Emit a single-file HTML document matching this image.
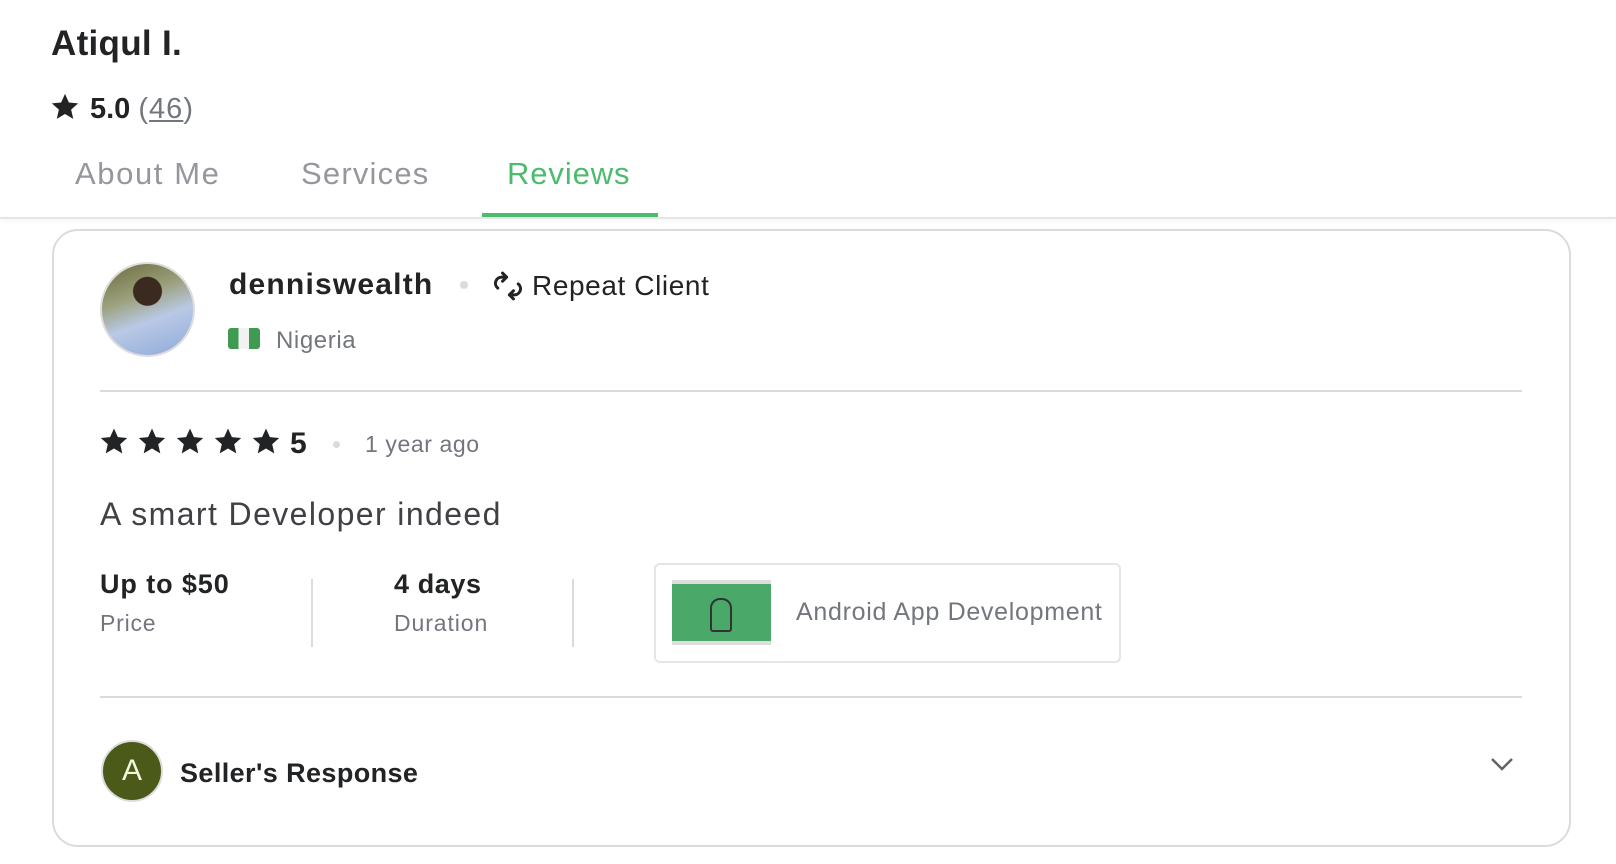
<!DOCTYPE html>
<html><head><meta charset="utf-8"><style>
*{margin:0;padding:0;box-sizing:border-box}
body{width:1616px;height:864px;background:#fff;font-family:"Liberation Sans",sans-serif;color:#222325;position:relative;overflow:hidden}
.a{position:absolute;white-space:nowrap}
.g{color:#74767e}
</style></head><body>
<div class="a" style="left:51px;top:24px;font-size:35px;font-weight:bold;letter-spacing:0.3px">Atiqul I.</div>
<svg class="a" style="left:49px;top:92px" width="32" height="30" viewBox="0 0 24 24"><path d="M12 1.5l3.1 6.9 7.4.7-5.6 5 1.7 7.4L12 17.6l-6.6 3.9 1.7-7.4-5.6-5 7.4-.7z" fill="#222325"/></svg>
<div class="a" style="left:90px;top:93px;font-size:29px;font-weight:bold;">5.0 <span class="g" style="font-weight:normal;letter-spacing:1px">(<u>46</u>)</span></div>
<div class="a g" style="left:75px;top:156px;font-size:31px;color:#95979d;letter-spacing:1.6px">About Me</div>
<div class="a g" style="left:301px;top:156px;font-size:31px;color:#95979d;letter-spacing:1.2px">Services</div>
<div class="a" style="left:507px;top:156px;font-size:31px;color:#4dbb6d;letter-spacing:0.9px">Reviews</div>
<div class="a" style="left:482px;top:213px;width:176px;height:4px;background:#4dbb6d"></div>
<div class="a" style="left:0;top:217px;width:1616px;height:2px;background:#e4e5e7;box-shadow:0 2px 4px rgba(0,0,0,.06)"></div>
<div class="a" style="left:52px;top:229px;width:1519px;height:618px;border:2px solid #dadbdd;border-radius:26px"></div>
<div class="a" style="left:100px;top:262px;width:95px;height:95px;border-radius:50%;border:2px solid #ddd;background:radial-gradient(circle at 50% 30%,#3a2a20 0 18%,transparent 19%),linear-gradient(160deg,#6b6a3d 0%,#9aa07a 35%,#b9c9e6 60%,#8ea9d8 100%)"></div>
<div class="a" style="left:229px;top:268px;font-size:30px;font-weight:bold;letter-spacing:1.2px">denniswealth</div>
<div class="a" style="left:460px;top:281px;width:8px;height:8px;border-radius:50%;background:#dadbdd"></div>
<svg class="a" style="left:491px;top:271px" width="34" height="30" viewBox="0 0 24 22"><path d="M11 4.5H7.5A4.5 4.5 0 0 0 4.5 12.5M8 1.5L11 4.5 8 7.5M13 17.5h3.5A4.5 4.5 0 0 0 19.5 9.5M16 20.5l-3-3 3-3" fill="none" stroke="#222325" stroke-width="2.2" stroke-linecap="round" stroke-linejoin="round"/></svg>
<div class="a" style="left:532px;top:270px;font-size:28px;letter-spacing:0.6px">Repeat Client</div>
<div class="a" style="left:228px;top:328px;width:32px;height:21px;border-radius:3px;background:linear-gradient(90deg,#3f9a52 0 33%,#f2f2f2 33% 66%,#3f9a52 66%)"></div>
<div class="a g" style="left:276px;top:327px;font-size:24px;letter-spacing:0.6px">Nigeria</div>
<div class="a" style="left:100px;top:390px;width:1422px;height:2px;background:#dadbdd"></div>
<div class="a" style="left:99px;top:427px;font-size:0">
<svg width="290" height="32" viewBox="0 0 290 32"><defs><path id="s" d="M15 1.5l3.9 8.6 9.3.9-7 6.2 2.1 9.2L15 21.5l-8.3 4.9 2.1-9.2-7-6.2 9.3-.9z" fill="#222325"/></defs><use href="#s"/><use href="#s" x="38"/><use href="#s" x="76"/><use href="#s" x="114"/><use href="#s" x="152"/></svg></div>
<div class="a" style="left:290px;top:427px;font-size:30px;font-weight:bold;">5</div>
<div class="a" style="left:333px;top:441px;width:7px;height:7px;border-radius:50%;background:#dadbdd"></div>
<div class="a g" style="left:365px;top:431px;font-size:23px;letter-spacing:0.6px">1 year ago</div>
<div class="a" style="left:100px;top:496px;font-size:32px;color:#404145;letter-spacing:1.4px">A smart Developer indeed</div>
<div class="a" style="left:100px;top:569px;font-size:27px;font-weight:bold;letter-spacing:0.9px">Up to $50</div>
<div class="a g" style="left:100px;top:610px;font-size:23px;letter-spacing:0.8px">Price</div>
<div class="a" style="left:311px;top:579px;width:2px;height:68px;background:#dadbdd"></div>
<div class="a" style="left:394px;top:569px;font-size:27px;font-weight:bold;letter-spacing:0.6px">4 days</div>
<div class="a g" style="left:394px;top:610px;font-size:23px;letter-spacing:0.9px">Duration</div>
<div class="a" style="left:572px;top:579px;width:2px;height:68px;background:#dadbdd"></div>
<div class="a" style="left:654px;top:563px;width:467px;height:100px;border:2px solid #e4e5e7;border-radius:6px"></div>
<div class="a" style="left:672px;top:580px;width:99px;height:65px;background:#4aa868;border-top:4px solid #ddd;border-bottom:4px solid #ddd"></div>
<div class="a" style="left:710px;top:598px;width:22px;height:34px;border:2px solid #333;border-radius:10px 10px 3px 3px"></div>
<div class="a g" style="left:796px;top:598px;font-size:25px;letter-spacing:0.7px">Android App Development</div>
<div class="a" style="left:100px;top:696px;width:1422px;height:2px;background:#dadbdd"></div>
<div class="a" style="left:101px;top:740px;width:62px;height:62px;border-radius:50%;background:#4b5a18;border:2px solid #ddd;color:#f3f6dc;font-size:30px;text-align:center;line-height:58px">A</div>
<div class="a" style="left:180px;top:758px;font-size:27px;font-weight:bold;letter-spacing:0.4px">Seller's Response</div>
<svg class="a" style="left:1490px;top:756px" width="24" height="16" viewBox="0 0 24 16"><path d="M2 3l10 10 10-10" fill="none" stroke="#62646a" stroke-width="2.5"/></svg>
</body></html>
